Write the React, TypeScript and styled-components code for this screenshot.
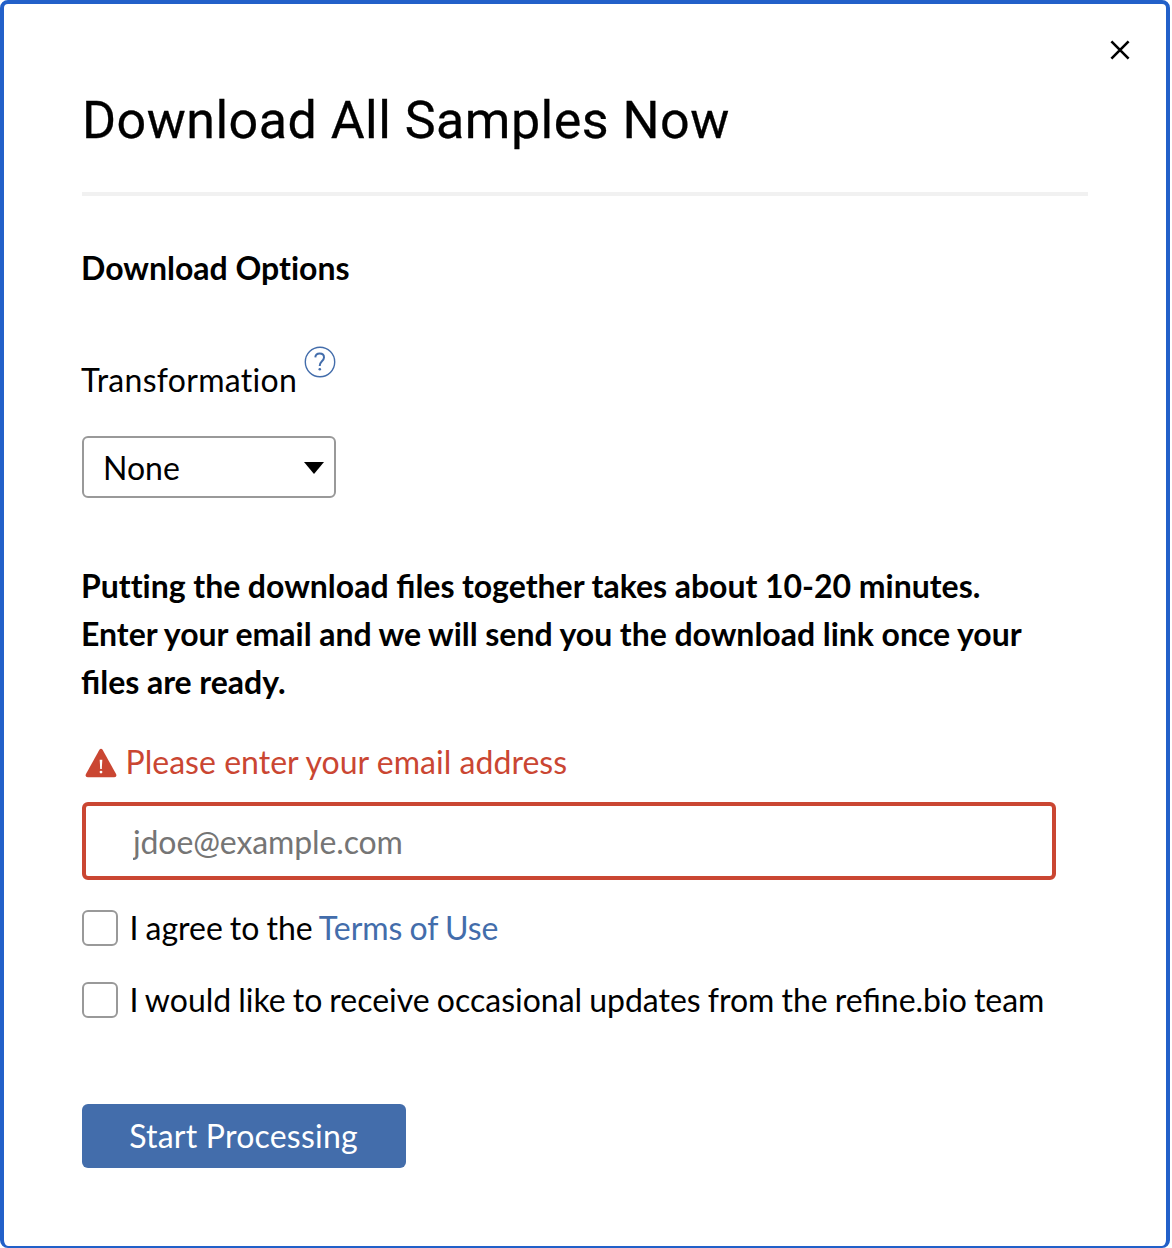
import React from 'react';
import styled, { createGlobalStyle } from 'styled-components';

const GlobalStyle = createGlobalStyle`
  *, *::before, *::after { box-sizing: border-box; }
  body {
    margin: 0;
    overflow: hidden;
    background: #fff;
    color: #000;
    font-family: Lato, 'Liberation Sans', sans-serif;
    font-size: 32px;
    line-height: 48px;
    font-variant-ligatures: none;
  }
`;

const Modal = styled.main`
  position: relative;
  width: 1170px;
  height: 1248px;
  padding: 87px 78px 0;
  border: 4px solid #2260c9;
  border-bottom-width: 2px;
  border-radius: 8px;
`;

const CloseButton = styled.button`
  position: absolute;
  top: 32px;
  right: 32px;
  display: flex;
  padding: 4px;
  border: 0;
  background: none;
  cursor: pointer;
`;

const Title = styled.h1`
  margin: 0;
  width: 1006px;
  height: 105px;
  border-bottom: 4px solid #f1f1f1;
  font-family: Roboto, 'Liberation Sans', sans-serif;
  font-size: 52px;
  font-weight: 400;
  line-height: 60px;
  letter-spacing: 0.48px;
  white-space: nowrap;
  -webkit-text-stroke: 0.3px #000;
`;

const Heading = styled.h2`
  margin: 48px 0 64px -1px;
  font-size: 32px;
  font-weight: 700;
`;

const Field = styled.div`
  display: flex;
  flex-direction: column;
  align-items: flex-start;
  gap: 32px;
`;

const FieldLabel = styled.div`
  display: flex;
  gap: 7px;
  margin-left: -1px;
  letter-spacing: 0.29px;
`;

const HelpIcon = styled.svg`
  margin-top: -10px;
`;

const Dropdown = styled.button`
  display: flex;
  align-items: center;
  justify-content: space-between;
  width: 254px;
  height: 62px;
  padding: 1px 10px 0 19px;
  border: 2px solid #999;
  border-radius: 6px;
  background: #fff;
  color: #000;
  font: inherit;
`;

const Notice = styled.p`
  margin: 64px 0 32px -1px;
  font-weight: 700;
  word-spacing: -0.2px;
`;

const NoticeLine = styled.span`
  display: block;
  white-space: nowrap;
`;

const Ligature = styled.span`
  font-variant-ligatures: common-ligatures;
`;

const ErrorMessage = styled.div`
  display: flex;
  align-items: center;
  gap: 8.5px;
  padding-left: 3px;
  color: #ca4632;
  letter-spacing: 0.03px;
`;

const WarningIcon = styled.svg`
  margin-top: 2px;
`;

const EmailInput = styled.input`
  display: block;
  width: 974px;
  height: 78px;
  margin: 16px 0 24px;
  padding: 1px 48px 0 47px;
  border: 4px solid #ca4632;
  border-radius: 6px;
  outline: 0;
  font: inherit;
  letter-spacing: -0.12px;
  &::placeholder {
    color: #757575;
    opacity: 1;
  }
`;

const CheckRow = styled.label`
  display: flex;
  align-items: center;
  gap: 11.5px;
  margin-bottom: 24px;
  white-space: nowrap;
  word-spacing: -1.15px;
`;

const Checkbox = styled.input.attrs({ type: 'checkbox' })`
  appearance: none;
  flex: none;
  width: 36px;
  height: 36px;
  margin: 0;
  border: 2px solid #999;
  border-radius: 6px;
  background: #fff;
`;

const Link = styled.a`
  color: #436dab;
  text-decoration: none;
`;

const SubmitButton = styled.button`
  display: block;
  width: 324px;
  height: 64px;
  margin-top: 80px;
  padding: 0 1px 0 0;
  border: 0;
  border-radius: 6px;
  background: #436dab;
  color: #fff;
  font: inherit;
  letter-spacing: 0.22px;
`;

export default function App() {
  return (
    <>
      <GlobalStyle />
      <Modal>
        <CloseButton aria-label="Close">
          <svg width="20" height="20" viewBox="0 0 20 20" fill="none" stroke="#000" strokeWidth="2.6">
            <path d="M1.4 1.4 18.6 18.6M18.6 1.4 1.4 18.6" />
          </svg>
        </CloseButton>
        <Title>Download All Samples Now</Title>
        <Heading>Download Options</Heading>
        <Field>
          <FieldLabel>
            <span>Transformation</span>
            <HelpIcon width="32" height="32" viewBox="0 0 32 32" fill="none" stroke="#436dab">
              <circle cx="16" cy="16" r="14.7" strokeWidth="1.4" />
              <path d="M11.3 11.4C11.5 8.9 13.2 7.6 15.7 7.6C18.3 7.6 20 9.1 20 11.4C20 13.2 19.1 14.1 17.7 15.4C16.3 16.7 15.7 17.5 15.7 20.1" strokeWidth="2" />
              <circle cx="15.8" cy="23.2" r="1.3" fill="#436dab" stroke="none" />
            </HelpIcon>
          </FieldLabel>
          <Dropdown>
            <span>None</span>
            <svg width="20" height="12" viewBox="0 0 20 12">
              <path d="M0 0H20L10 12Z" />
            </svg>
          </Dropdown>
        </Field>
        <Notice>
          <NoticeLine>
            Putting the download <Ligature>files</Ligature> together takes about 10-20 minutes.
          </NoticeLine>
          <NoticeLine>Enter your email and we will send you the download link once your</NoticeLine>
          <NoticeLine>
            <Ligature>files are ready.</Ligature>
          </NoticeLine>
        </Notice>
        <ErrorMessage>
          <WarningIcon width="32" height="30" viewBox="0 0 32 30">
            <path
              d="M14.4 1.8Q16 -.5 17.6 1.8L31.2 26.3Q32 29.2 29.3 29.3H2.7Q0 29.2 .8 26.3Z"
              fill="#ca4632"
            />
            <path d="M14.7 11.8H17.3L16.8 21H15.2Z" fill="#fff" />
            <circle cx="16" cy="24.1" r="1.4" fill="#fff" />
          </WarningIcon>
          <span>Please enter your email address</span>
        </ErrorMessage>
        <EmailInput placeholder="jdoe@example.com" />
        <CheckRow>
          <Checkbox />
          <span>
            I agree to the <Link>Terms of Use</Link>
          </span>
        </CheckRow>
        <CheckRow>
          <Checkbox />
          <span>
            I would like to receive occasional updates from the <Ligature>refine.bio</Ligature> team
          </span>
        </CheckRow>
        <SubmitButton>Start Processing</SubmitButton>
      </Modal>
    </>
  );
}
